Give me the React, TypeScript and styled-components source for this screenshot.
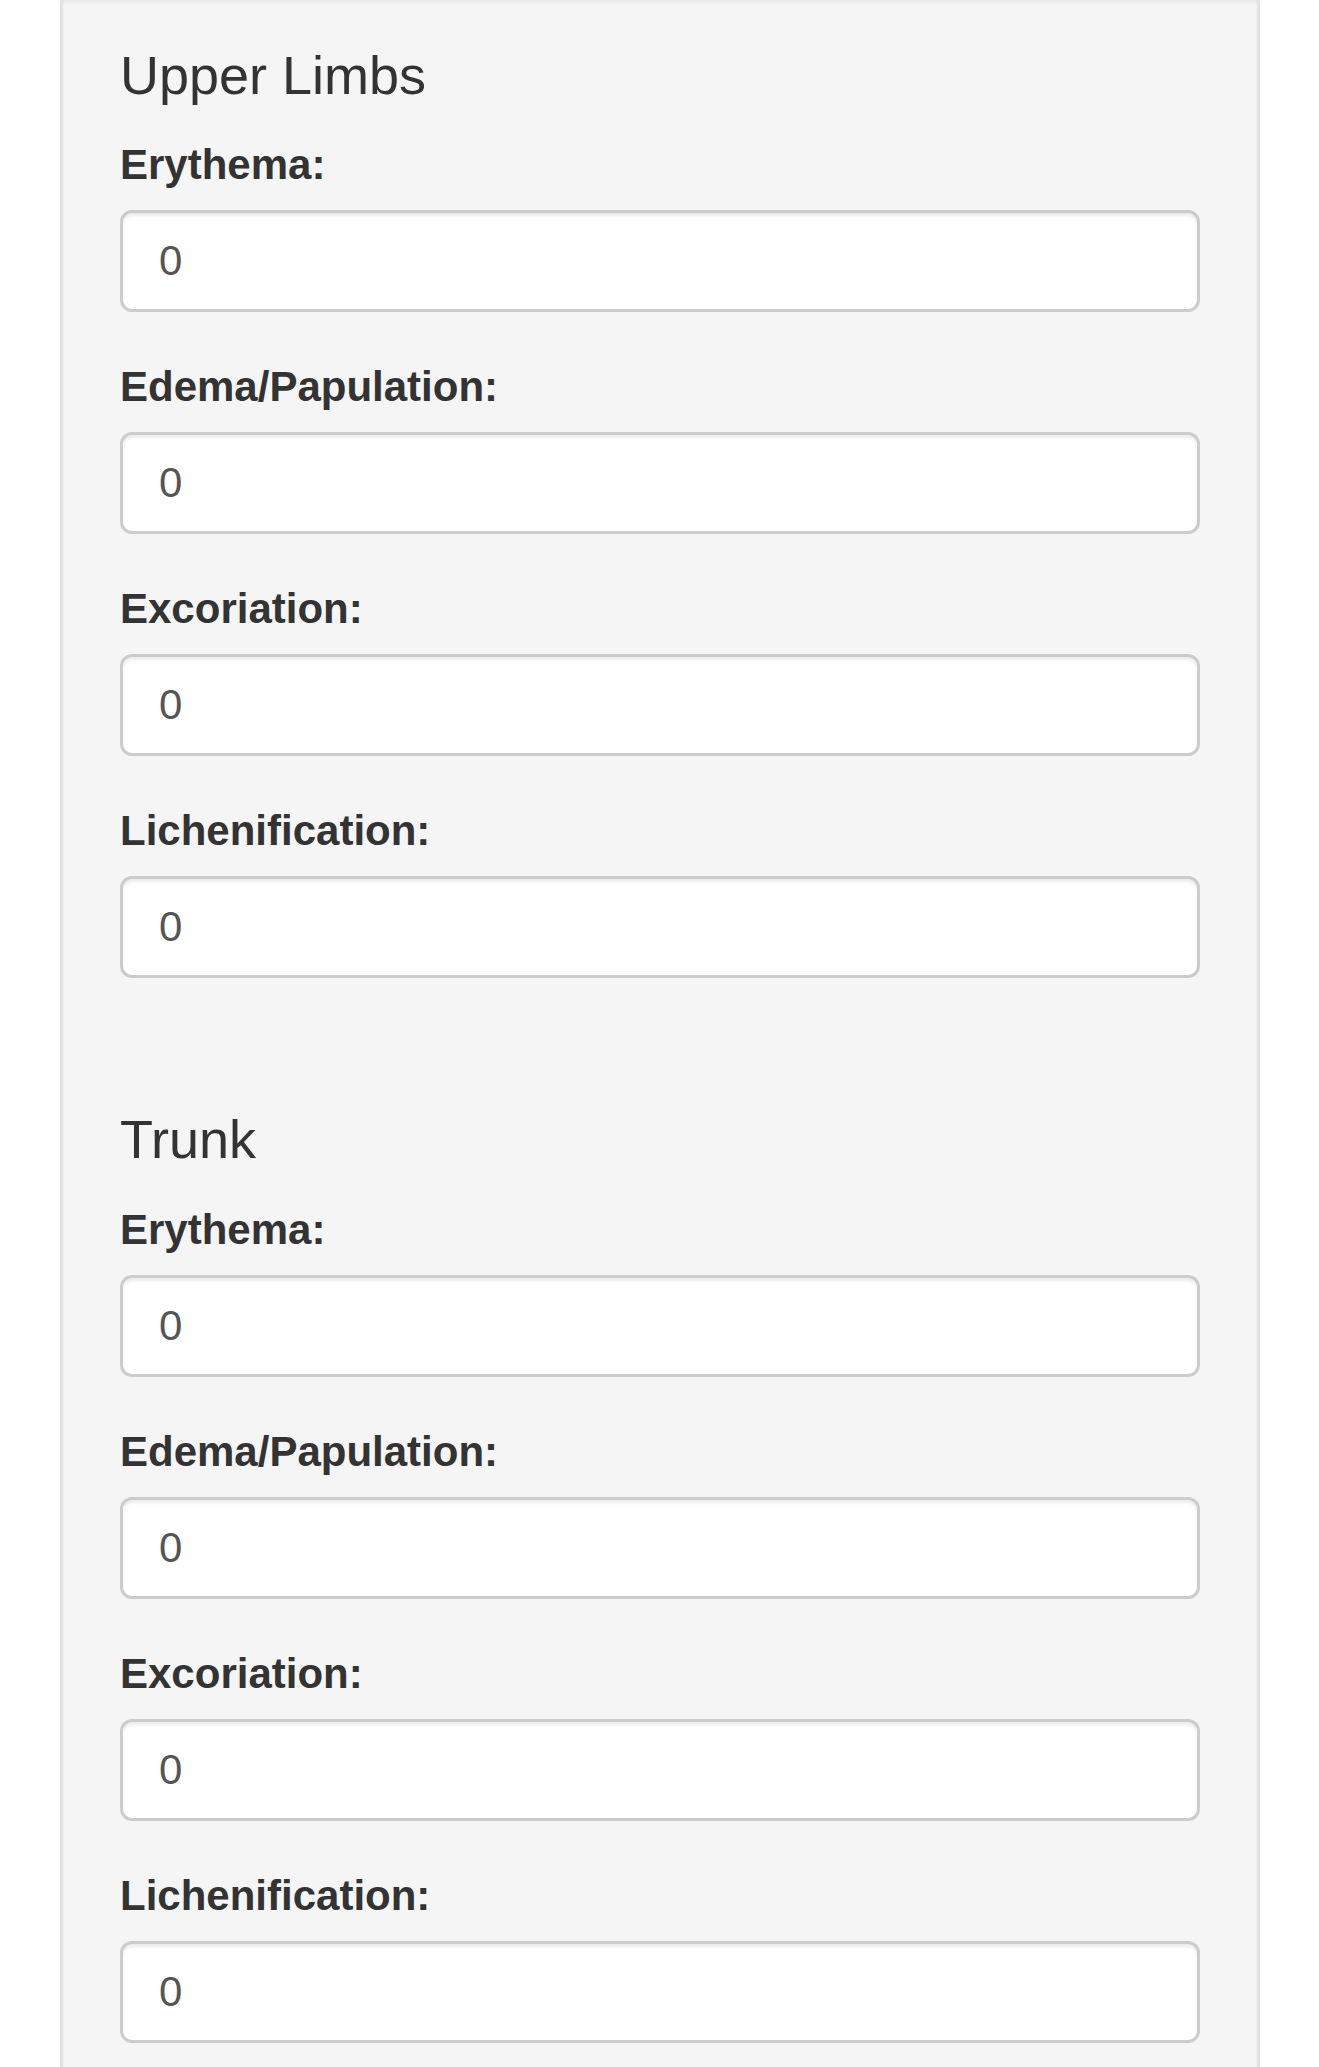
import React from 'react';
import styled, { createGlobalStyle } from 'styled-components';

const GlobalStyle = createGlobalStyle`
  html, body {
    margin: 0;
    padding: 0;
    background: #fff;
  }

  body {
    font-family: "Liberation Sans", Arial, Helvetica, sans-serif;
    font-size: 42px;
    line-height: 60px;
    color: #333;
  }

  * {
    box-sizing: border-box;
  }
`;

const Page = styled.div`
  padding: 0 59px 0 60px;
  min-height: 2067px;
`;

const Well = styled.div`
  background: #f5f5f5;
  border: 3px solid #e3e3e3;
  border-top: none;
  padding: 16px 57px 57px;
  min-height: 2067px;
  box-shadow: inset 0 3px 3px rgba(0, 0, 0, 0.05);
`;

const SectionTitle = styled.h4`
  font-size: 54px;
  font-weight: 500;
  line-height: 1.1;
  margin: 30px 0 30px;
  color: #333;
`;

const FormGroup = styled.div`
  margin-bottom: 45px;
`;

const Label = styled.label`
  display: inline-block;
  max-width: 100%;
  margin-bottom: 15px;
  font-weight: 700;
  font-size: 42px;
  line-height: 60px;
`;

const Input = styled.input`
  display: block;
  width: 100%;
  height: 102px;
  padding: 18px 36px;
  font-family: inherit;
  font-size: 42px;
  line-height: 60px;
  color: #555;
  background: #fff;
  border: 3px solid #ccc;
  border-radius: 12px;
  box-shadow: inset 0 3px 3px rgba(0, 0, 0, 0.075);
  outline: none;
`;

const Spacer = styled.div`
  height: 57px;
`;

const fields = ['Erythema', 'Edema/Papulation', 'Excoriation', 'Lichenification'];

const sections = [
  { key: 'upper', title: 'Upper Limbs' },
  { key: 'trunk', title: 'Trunk' },
];

const Section = ({ id, title }: { id: string; title: string }) => (
  <>
    <SectionTitle>{title}</SectionTitle>
    {fields.map((f) => (
      <FormGroup key={f}>
        <Label htmlFor={`${id}-${f}`}>{f}:</Label>
        <Input id={`${id}-${f}`} type="text" defaultValue="0" />
      </FormGroup>
    ))}
  </>
);

export default function App() {
  return (
    <Page>
      <GlobalStyle />
      <Well>
        {sections.map((s, i) => (
          <React.Fragment key={s.key}>
            {i > 0 && <Spacer />}
            <Section id={s.key} title={s.title} />
          </React.Fragment>
        ))}
      </Well>
    </Page>
  );
}
